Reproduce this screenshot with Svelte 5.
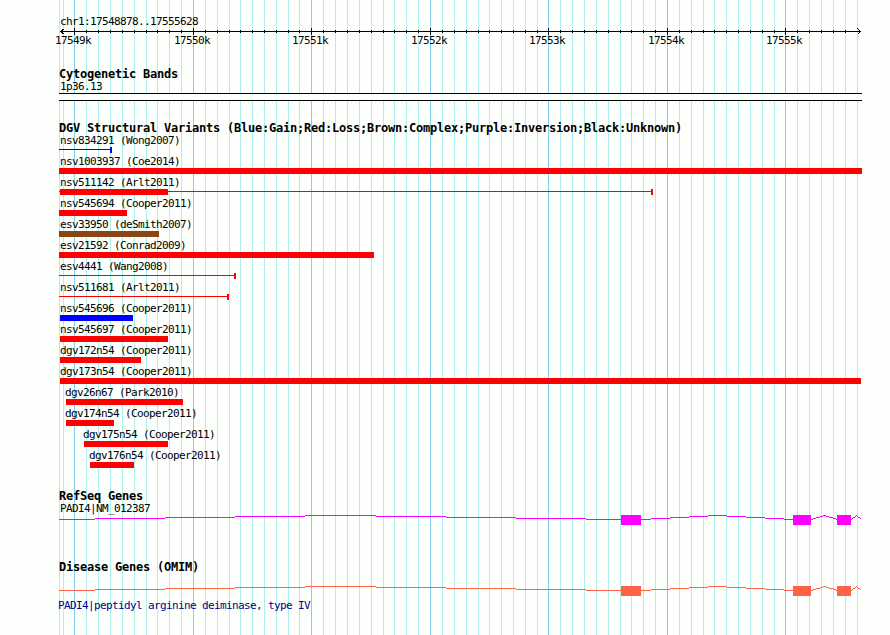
<script>
	const LEFT = 59;
	const WIDTH = 803;

	const gridX = [
		59, 63, 74, 86, 98, 110, 122, 134, 146, 157, 169, 181, 193, 205, 217, 229, 240, 252, 264, 276,
		288, 299, 311, 323, 335, 347, 359, 371, 383, 394, 406, 418, 430, 442, 454, 466, 478, 489, 501,
		513, 525, 537, 548, 560, 572, 584, 596, 608, 620, 631, 643, 655, 667, 679, 691, 703, 714, 726,
		738, 750, 762, 774, 785, 797, 809, 821, 833, 845, 857
	].map((x) => x - LEFT);

	const majors = [
		{ x: 74 - LEFT, label: '17549k' },
		{ x: 193 - LEFT, label: '17550k' },
		{ x: 311 - LEFT, label: '17551k' },
		{ x: 430 - LEFT, label: '17552k' },
		{ x: 548 - LEFT, label: '17553k' },
		{ x: 667 - LEFT, label: '17554k' },
		{ x: 785 - LEFT, label: '17555k' }
	];

	const isMajor = (x) => majors.some((m) => m.x === x);

	// bar: [start, end], line: end of the thin range line
	const variants = [
		{ name: 'nsv834291 (Wong2007)', indent: 1, type: 'gain', line: 53 },
		{ name: 'nsv1003937 (Coe2014)', indent: 1, type: 'loss', bar: [0, 803] },
		{ name: 'nsv511142 (Arlt2011)', indent: 1, type: 'loss', bar: [1, 109], line: 594 },
		{ name: 'nsv545694 (Cooper2011)', indent: 1, type: 'loss', bar: [0, 68] },
		{ name: 'esv33950 (deSmith2007)', indent: 1, type: 'complex', bar: [0, 100] },
		{ name: 'esv21592 (Conrad2009)', indent: 1, type: 'loss', bar: [0, 315] },
		{ name: 'esv4441 (Wang2008)', indent: 1, type: 'loss', line: 177 },
		{ name: 'nsv511681 (Arlt2011)', indent: 1, type: 'loss', line: 170 },
		{ name: 'nsv545696 (Cooper2011)', indent: 1, type: 'gain', bar: [1, 74] },
		{ name: 'nsv545697 (Cooper2011)', indent: 1, type: 'loss', bar: [1, 109] },
		{ name: 'dgv172n54 (Cooper2011)', indent: 1, type: 'loss', bar: [1, 82] },
		{ name: 'dgv173n54 (Cooper2011)', indent: 1, type: 'loss', bar: [1, 802] },
		{ name: 'dgv26n67 (Park2010)', indent: 6, type: 'loss', bar: [7, 124] },
		{ name: 'dgv174n54 (Cooper2011)', indent: 6, type: 'loss', bar: [7, 55] },
		{ name: 'dgv175n54 (Cooper2011)', indent: 24, type: 'loss', bar: [25, 109] },
		{ name: 'dgv176n54 (Cooper2011)', indent: 30, type: 'loss', bar: [31, 75] }
	];

	const exons = [
		[562, 582],
		[734, 752],
		[778, 792]
	];

	const introns = [
		[0, 281, 562],
		[582, 658, 734],
		[752, 765, 778],
		[792, 797, 802]
	];

	// stepped hat between two exons, four pixels high
	function hat([from, peak, to]) {
		let d = '';
		let last = null;
		for (let x = from; x < to; x++) {
			const span = x < peak ? peak - from : to - peak;
			const y = 4 - Math.round(4 * (1 - Math.abs(x - peak) / span));
			if (y !== last) {
				if (last !== null) d += `H${x}`;
				d += `M${x} ${y + 0.5}`;
				last = y;
			}
		}
		return d + `H${to}`;
	}
</script>

{#snippet gene(kind)}
	<svg class="gene {kind}" width={WIDTH} height="10">
		{#each introns as intron}
			<path d={hat(intron)} />
		{/each}
		{#each exons as [from, to]}
			<rect x={from} width={to - from} height="10" />
		{/each}
	</svg>
{/snippet}

<main>
	<svg class="grid" width={WIDTH} height="635">
		{#each gridX as x}
			<rect class:major={isMajor(x)} {x} width="1" height="635" />
		{/each}
	</svg>

	<div class="tracks">
		<div class="label region">chr1:17548878..17555628</div>
		<svg class="ruler" width={WIDTH} height="7">
			<rect x="1" y="3" width="801" height="1" />
			{#each gridX.slice(2, -1) as x}
				{#if isMajor(x)}
					<rect {x} width="1" height="7" />
				{:else}
					<rect {x} y="2" width="1" height="3" />
				{/if}
			{/each}
			<path d="M5.5 0.5L1.5 3.5L5.5 6.5M798.5 0.5L801.5 3.5L798.5 6.5" />
		</svg>
		<div class="scale">
			{#each majors as { x, label }}
				<span class="label" style="left: {x - 19}px">{label}</span>
			{/each}
		</div>

		<section class="bands">
			<h2>Cytogenetic Bands</h2>
			<div class="label name">1p36.13</div>
			<div class="band"></div>
		</section>

		<section class="variants">
			<h2>DGV Structural Variants (Blue:Gain;Red:Loss;Brown:Complex;Purple:Inversion;Black:Unknown)</h2>
			{#each variants as v}
				<div class="variant">
					<div class="label" style="margin-left: {v.indent}px">{v.name}</div>
					<svg class={v.type} width={WIDTH} height="6">
						{#if v.line}
							<rect y="2" width={v.line} height="1" />
							<rect x={v.line - 2} width="2" height="6" />
						{/if}
						{#if v.bar}
							<rect x={v.bar[0]} width={v.bar[1] - v.bar[0]} height="6" />
						{/if}
					</svg>
				</div>
			{/each}
		</section>

		<section class="refseq">
			<h2>RefSeq Genes</h2>
			<div class="label name">PADI4|NM_012387</div>
			{@render gene('transcript')}
		</section>

		<section class="omim">
			<h2>Disease Genes (OMIM)</h2>
			{@render gene('disease')}
			<div class="label description">PADI4|peptidyl arginine deiminase, type IV</div>
		</section>
	</div>
</main>

<style>
	:global(body) {
		margin: 0;
		background: #fdfffc;
	}

	main {
		display: grid;
		box-sizing: border-box;
		width: 890px;
		height: 635px;
		padding-left: 59px;
		overflow: hidden;
		background: #fdfffc;
	}

	.grid,
	.tracks {
		grid-area: 1 / 1;
	}

	.tracks {
		width: 803px;
		padding-top: 15px;
		box-sizing: border-box;
	}

	svg {
		display: block;
		shape-rendering: crispEdges;
	}

	.grid {
		fill: #afeeee;
	}

	.grid .major {
		fill: #87ceeb;
	}

	.label {
		height: 13px;
		font: 11px/13px 'DejaVu Sans Mono', monospace;
		letter-spacing: -0.622px;
		white-space: pre;
		color: #000;
	}

	h2 {
		height: 12px;
		margin: 0;
		font: bold 12px/12px 'DejaVu Sans Mono', monospace;
		letter-spacing: -0.224px;
		white-space: pre;
		color: #000;
	}

	.region,
	.name {
		margin-left: 1px;
	}

	.ruler path {
		fill: none;
		stroke: #000;
	}

	/* tick labels are centred on their grid lines */
	.scale {
		position: relative;
		height: 13px;
		margin-top: -1px;
	}

	.scale .label {
		position: absolute;
		top: 0;
	}

	.bands {
		margin-top: 21px;
	}

	.band {
		height: 6px;
		border-top: 1px solid #000;
		border-bottom: 1px solid #000;
		background: #fdfffc;
	}

	.variants {
		margin-top: 21px;
	}

	.variant {
		padding-bottom: 2px;
	}

	.gain {
		fill: #00f;
	}

	.loss {
		fill: #f00;
	}

	.complex {
		fill: #8b4513;
	}

	.refseq {
		margin-top: 20px;
	}

	.gene path {
		fill: none;
	}

	.transcript {
		fill: #f0f;
		stroke: #f0f;
	}

	.disease {
		fill: #ff6347;
		stroke: #ff6347;
	}

	.gene rect {
		stroke: none;
	}

	.omim {
		margin-top: 36px;
	}

	.omim .gene {
		margin-top: 13px;
	}

	.description {
		margin: 3px 0 0 -1px;
		color: #00008b;
	}
</style>
